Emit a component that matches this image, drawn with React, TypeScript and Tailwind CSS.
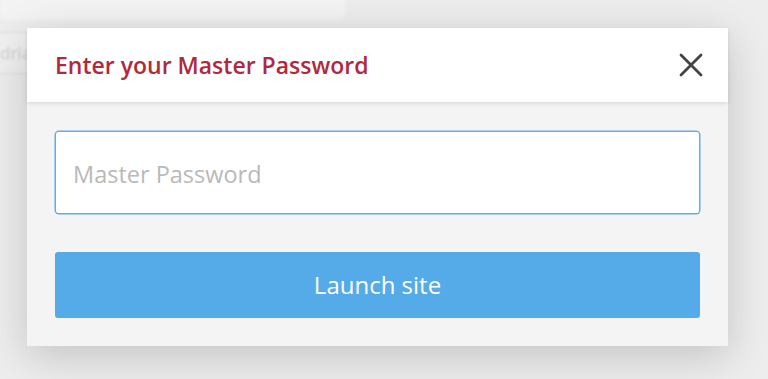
import React from "react";

export default function App() {
  return (
    <div
      className="relative w-[768px] h-[379px] overflow-hidden bg-[#ededed]"
      style={{ fontFamily: '"Open Sans", "Noto Sans", sans-serif' }}
    >
      {/* underlying page hint */}
      <div className="absolute left-0 top-[-10px] w-[345px] h-[30px] bg-[#f3f3f3] rounded-b-md blur-[2px]" />
      <div className="absolute left-[-10px] top-[32px] w-[60px] h-[42px] bg-[#dedede] p-px rounded-sm blur-[1px]">
        <div className="w-full h-full bg-[#f0f0f0] flex items-center pl-[9px] text-[17px] text-[#cfcfcf]">
          drian
        </div>
      </div>

      {/* modal */}
      <div className="absolute left-[27px] top-[28px] w-[701px] h-[318px] bg-[#f4f4f4] shadow-[0_10px_40px_rgba(0,0,0,0.18)] flex flex-col">
        <div className="h-[74px] bg-white flex items-center justify-between pl-[28px] pr-[24px] shadow-[0_2px_4px_rgba(0,0,0,0.1)] relative z-10">
          <h1 className="text-[23px] font-semibold text-[#b0293c]">
            Enter your Master Password
          </h1>
          <svg width="26" height="26" viewBox="0 0 26 26" className="text-[#444]">
            <path d="M3 3 L23 23 M23 3 L3 23" stroke="currentColor" strokeWidth="2.8" strokeLinecap="round" />
          </svg>
        </div>
        <div className="flex flex-col px-[28px] pt-[30px] gap-[39px]">
          <div className="mx-px h-[81px] bg-white rounded-[3px] overflow-hidden shadow-[0_0_0_1.5px_#5eaee8] flex items-center">
            <input
              type="password"
              placeholder="Master Password"
              className="appearance-none h-full w-full bg-white border-none pl-[17px] pr-[16px] pt-[3px] text-[23.5px] text-[#444] placeholder:text-[#b9b9b9] outline-none"
            />
          </div>
          <button className="h-[66px] w-full bg-[#55abe8] rounded-[3px] text-white text-[24px]">
            Launch site
          </button>
        </div>
      </div>
    </div>
  );
}
